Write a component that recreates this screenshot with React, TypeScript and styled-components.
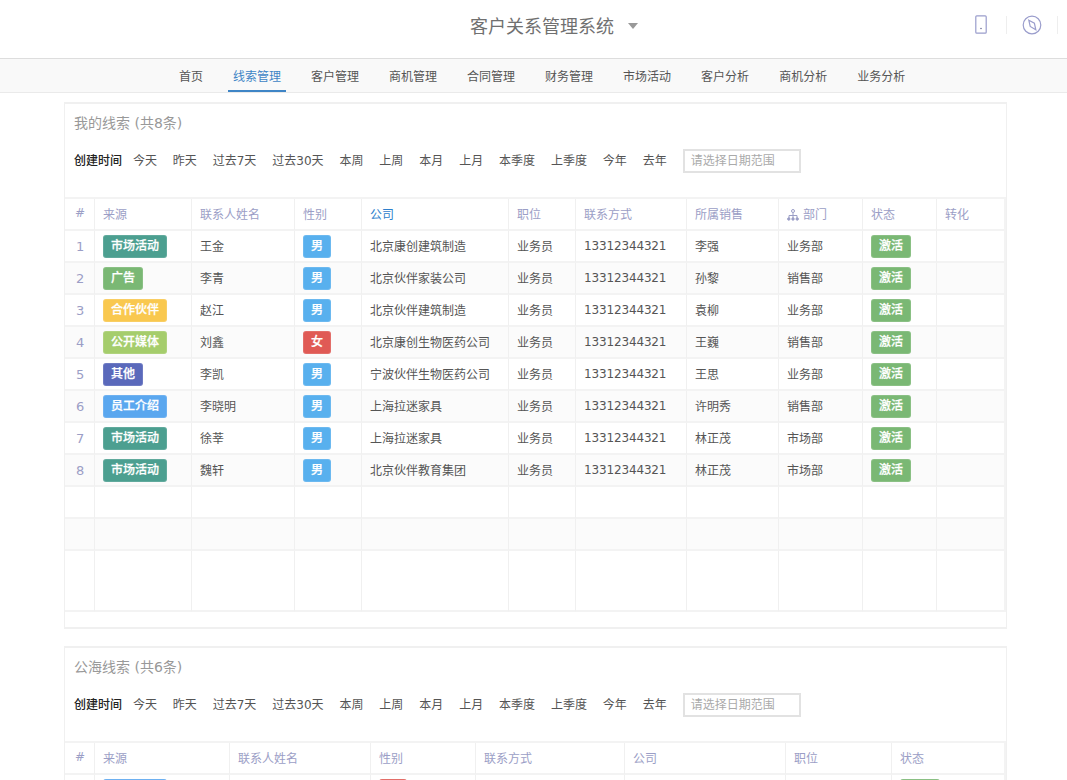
import styled, { createGlobalStyle } from "styled-components";

const tones: Record<string, string> = {
  teal: "#4c9f90",
  green: "#7ab874",
  yellow: "#f9c84f",
  lime: "#a5cd6c",
  indigo: "#5a69bb",
  blue: "#5aa7ef",
  sky: "#58b0ee",
  red: "#e05a55",
};

const GlobalStyle = createGlobalStyle`
  html, body {
    margin: 0;
    height: 100%;
    overflow: hidden;
    background: #fff;
  }
  body {
    font-family: "DejaVu Sans", "Noto Sans CJK SC", sans-serif;
    font-size: 12px;
    color: #555;
  }
`;

const Header = styled.header`
  height: 58px;
  display: flex;
  align-items: center;
  background: #fff;
`;

const TitleBlock = styled.div`
  margin: -8px 0 0 470px;
  display: flex;
  align-items: center;
  gap: 14px;
  font-size: 18px;
  color: #707070;
`;

const Caret = styled.span`
  width: 0;
  height: 0;
  margin-top: 1px;
  border-left: 5px solid transparent;
  border-right: 5px solid transparent;
  border-top: 6px solid #999;
`;

const HeaderTools = styled.div`
  margin: -9px 9px 0 auto;
  display: flex;
  align-items: center;
`;

const ToolSlot = styled.div`
  width: 51px;
  height: 18px;
  box-sizing: border-box;
  display: flex;
  align-items: center;
  justify-content: center;
  border-right: 1px solid #eee;
  svg {
    display: block;
    flex: none;
  }
`;

const Nav = styled.nav`
  height: 33px;
  padding-left: 174px;
  display: flex;
  gap: 20px;
  background: #f9f9f9;
  border-top: 1px solid #ddd;
  border-bottom: 1px solid #eaeaea;
`;

const NavItem = styled.a<{ $active?: boolean }>`
  padding: 0 5px;
  line-height: 37px;
  height: 31px;
  color: ${({ $active }) => ($active ? "#3f85c6" : "#555")};
  border-bottom: 2px solid ${({ $active }) => ($active ? "#3f85c6" : "transparent")};
`;

const Page = styled.main`
  padding: 9px 0 0 64px;
  display: grid;
  gap: 17px;
  width: 941px;
`;

const Card = styled.section`
  border: 1px solid #f0f0f0;
  border-width: 2px 1px;
  background: #fff;
  padding-bottom: 15px;
`;

const CardTitle = styled.h2`
  margin: 0;
  padding: 7px 9px 0;
  height: 30px;
  font-size: 14px;
  line-height: 24px;
  font-weight: 400;
  color: #999;
`;

const FilterRow = styled.div`
  margin-top: 6px;
  height: 24px;
  padding-left: 9px;
  display: flex;
  align-items: center;
  gap: 15.9px;
  color: #555;
`;

const FilterLabel = styled.span`
  margin-right: -5px;
  font-weight: 500;
  color: #222;
`;

const DateInput = styled.div`
  width: 118px;
  height: 24px;
  margin-top: 4px;
  box-sizing: border-box;
  padding-left: 6px;
  line-height: 20px;
  border: 2px solid #e2e2e2;
  color: #aaa;
`;

const Table = styled.table`
  margin-top: 26px;
  width: 939px;
  table-layout: fixed;
  border-collapse: separate;
  border-spacing: 0;
  border-top: 2px solid #f3f3f3;
  border-right: 2px solid #f3f3f3;
`;

const Th = styled.th<{ $accent?: boolean }>`
  height: 32px;
  box-sizing: border-box;
  padding: 0 8px 2px;
  text-align: left;
  font-weight: 400;
  white-space: nowrap;
  color: ${({ $accent }) => ($accent ? "#2f80cc" : "#9b9ec6")};
  border-left: 1px solid #f0f0f0;
  border-bottom: 2px solid #f3f3f3;
  &:first-child {
    padding-left: 10px;
    border-left: 0;
  }
  svg {
    margin-right: 4px;
    vertical-align: -2px;
  }
`;

const Row = styled.tr<{ $tall?: boolean }>`
  height: ${({ $tall }) => ($tall ? "61px" : "32px")};
  &:nth-child(even) {
    background: #fbfbfb;
  }
`;

const Td = styled.td<{ $latin?: boolean }>`
  box-sizing: border-box;
  padding: 0 8px ${({ $latin }) => ($latin ? "0" : "2px")};
  white-space: nowrap;
  color: #555;
  border-left: 1px solid #f0f0f0;
  border-bottom: 2px solid #f3f3f3;
  &:first-child {
    padding-left: 11px;
    border-left: 0;
    color: #9b9ec6;
    font-size: 13px;
  }
`;

const PhoneText = styled.span`
  letter-spacing: -0.15px;
`;

const Badge = styled.span<{ $tone: string }>`
  display: inline-block;
  height: 23px;
  margin-top: 2px;
  box-sizing: border-box;
  padding: 0 7px;
  line-height: 21px;
  vertical-align: middle;
  border-radius: 3px;
  font-weight: 500;
  -webkit-text-stroke: 0.25px #fff;
  color: #fff;
  background: ${({ $tone }) => tones[$tone]};
  border: 1px solid rgba(255, 255, 255, 0.12);
`;

const PhoneIcon = () => (
  <svg width="12" height="19" viewBox="0 0 12 19" fill="none" stroke="#9a9dcc" strokeWidth="1.2">
    <rect x="0.8" y="0.8" width="10.4" height="17.4" rx="1" />
    <circle cx="6" cy="13.5" r="0.8" fill="#6f7199" stroke="none" />
  </svg>
);

const CompassIcon = () => (
  <svg width="20" height="20" viewBox="0 0 20 20" fill="none" stroke="#9a9dcc" strokeWidth="1.2">
    <circle cx="10" cy="10" r="8.8" />
    <path d="M6.8 5.2 L12.4 8.2 L13.8 14.8 L8.2 11.4 Z" />
  </svg>
);

const OrgIcon = () => (
  <svg width="12" height="12" viewBox="0 0 12 12" fill="none" stroke="#9b9ec6" strokeWidth="1">
    <circle cx="6" cy="2" r="1.5" />
    <path d="M6 3.5 V9 M2 9 V6.5 H10 V9" />
    <circle cx="1.8" cy="10" r="1.2" fill="#9b9ec6" />
    <circle cx="6" cy="10" r="1.2" fill="#9b9ec6" />
    <circle cx="10.2" cy="10" r="1.2" fill="#9b9ec6" />
  </svg>
);

const navItems = ["首页", "线索管理", "客户管理", "商机管理", "合同管理", "财务管理", "市场活动", "客户分析", "商机分析", "业务分析"];
const ranges = ["今天", "昨天", "过去7天", "过去30天", "本周", "上周", "本月", "上月", "本季度", "上季度", "今年", "去年"];

const sourceTone: Record<string, string> = {
  市场活动: "teal",
  广告: "green",
  合作伙伴: "yellow",
  公开媒体: "lime",
  其他: "indigo",
  员工介绍: "blue",
};

const myLeads = [
  ["市场活动", "王金", "男", "北京康创建筑制造", "李强", "业务部"],
  ["广告", "李青", "男", "北京伙伴家装公司", "孙黎", "销售部"],
  ["合作伙伴", "赵江", "男", "北京伙伴建筑制造", "袁柳", "业务部"],
  ["公开媒体", "刘鑫", "女", "北京康创生物医药公司", "王巍", "销售部"],
  ["其他", "李凯", "男", "宁波伙伴生物医药公司", "王思", "业务部"],
  ["员工介绍", "李晓明", "男", "上海拉迷家具", "许明秀", "销售部"],
  ["市场活动", "徐莘", "男", "上海拉迷家具", "林正茂", "市场部"],
  ["市场活动", "魏轩", "男", "北京伙伴教育集团", "林正茂", "市场部"],
];

const myWidths = [29, 97, 103, 67, 147, 67, 111, 92, 84, 74, 68];
const publicWidths = [29, 135, 141, 105, 149, 161, 106, 113];

const Filters = () => (
  <FilterRow>
    <FilterLabel>创建时间</FilterLabel>
    {ranges.map((range) => (
      <span key={range}>{range}</span>
    ))}
    <DateInput>请选择日期范围</DateInput>
  </FilterRow>
);

const Cols = ({ widths }: { widths: number[] }) => (
  <colgroup>
    {widths.map((width, index) => (
      <col key={index} width={width} />
    ))}
  </colgroup>
);

const genderBadge = (gender: string) => <Badge $tone={gender === "女" ? "red" : "sky"}>{gender}</Badge>;

export default function App() {
  return (
    <>
      <GlobalStyle />
      <Header>
        <TitleBlock>
          客户关系管理系统
          <Caret />
        </TitleBlock>
        <HeaderTools>
          <ToolSlot>
            <PhoneIcon />
          </ToolSlot>
          <ToolSlot>
            <CompassIcon />
          </ToolSlot>
        </HeaderTools>
      </Header>
      <Nav>
        {navItems.map((item) => (
          <NavItem key={item} $active={item === "线索管理"}>
            {item}
          </NavItem>
        ))}
      </Nav>
      <Page>
        <Card>
          <CardTitle>我的线索 (共8条)</CardTitle>
          <Filters />
          <Table>
            <Cols widths={myWidths} />
            <thead>
              <tr>
                <Th>#</Th>
                <Th>来源</Th>
                <Th>联系人姓名</Th>
                <Th>性别</Th>
                <Th $accent>公司</Th>
                <Th>职位</Th>
                <Th>联系方式</Th>
                <Th>所属销售</Th>
                <Th>
                  <OrgIcon />
                  部门
                </Th>
                <Th>状态</Th>
                <Th>转化</Th>
              </tr>
            </thead>
            <tbody>
              {myLeads.map(([source, name, gender, company, sales, dept], index) => (
                <Row key={index}>
                  <Td $latin>{index + 1}</Td>
                  <Td>
                    <Badge $tone={sourceTone[source]}>{source}</Badge>
                  </Td>
                  <Td>{name}</Td>
                  <Td>{genderBadge(gender)}</Td>
                  <Td>{company}</Td>
                  <Td>业务员</Td>
                  <Td $latin>
                    <PhoneText>13312344321</PhoneText>
                  </Td>
                  <Td>{sales}</Td>
                  <Td>{dept}</Td>
                  <Td>
                    <Badge $tone="green">激活</Badge>
                  </Td>
                  <Td />
                </Row>
              ))}
              {[false, false, true].map((tall, index) => (
                <Row key={index} $tall={tall}>
                  {myWidths.map((_, cell) => (
                    <Td key={cell} />
                  ))}
                </Row>
              ))}
            </tbody>
          </Table>
        </Card>
        <Card>
          <CardTitle>公海线索 (共6条)</CardTitle>
          <Filters />
          <Table>
            <Cols widths={publicWidths} />
            <thead>
              <tr>
                <Th>#</Th>
                <Th>来源</Th>
                <Th>联系人姓名</Th>
                <Th>性别</Th>
                <Th>联系方式</Th>
                <Th>公司</Th>
                <Th>职位</Th>
                <Th>状态</Th>
              </tr>
            </thead>
            <tbody>
              <Row>
                <Td />
                <Td>
                  <Badge $tone="blue">员工介绍</Badge>
                </Td>
                <Td />
                <Td>{genderBadge("女")}</Td>
                <Td />
                <Td />
                <Td />
                <Td>
                  <Badge $tone="green">激活</Badge>
                </Td>
              </Row>
            </tbody>
          </Table>
        </Card>
      </Page>
    </>
  );
}
